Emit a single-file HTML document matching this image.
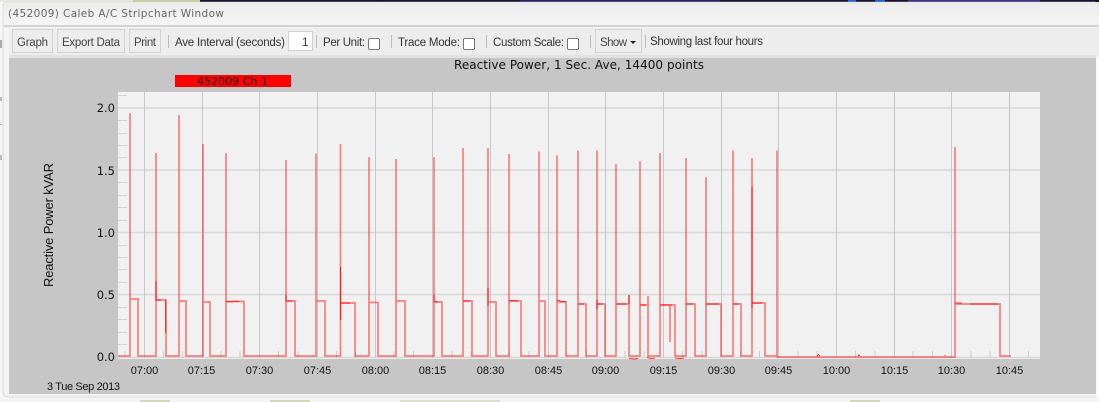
<!DOCTYPE html>
<html>
<head>
<meta charset="utf-8">
<style>
html,body{margin:0;padding:0;background:#fff;width:1099px;height:402px;overflow:hidden}
svg{display:block;filter:blur(0.35px)}
.t{font-family:"Liberation Sans",sans-serif;font-size:11.5px;fill:#444}
.d{font-family:"DejaVu Sans",sans-serif;fill:#111}
.x{font-family:"Liberation Sans",sans-serif;font-size:11px;text-anchor:middle}
.y{font-size:11.5px;text-anchor:end}
</style>
</head>
<body>
<svg width="1099" height="402" viewBox="0 0 1099 402" xmlns="http://www.w3.org/2000/svg">
<defs>
<linearGradient id="tb" x1="0" y1="0" x2="0" y2="1"><stop offset="0" stop-color="#ececec"/><stop offset="1" stop-color="#f6f6f6"/></linearGradient>
</defs>
<rect width="1099" height="402" fill="#f7f7f5"/>
<!-- desktop strip behind window -->
<rect x="0" y="0" width="133" height="2" fill="#e8e8e0"/>
<rect x="133" y="0" width="67" height="2" fill="#c8d0a0"/>
<rect x="200" y="0" width="899" height="2" fill="#15122a"/>
<rect x="520" y="0" width="200" height="2" fill="#2a2266"/>
<rect x="908" y="0" width="132" height="2" fill="#40308a"/>
<rect x="848" y="0" width="8" height="2" fill="#2060e0"/>
<rect x="875" y="0" width="10" height="2" fill="#2060e0"/>
<rect x="0" y="397" width="1099" height="5" fill="#f4f4f2"/>
<rect x="140" y="400" width="30" height="2" fill="#d6d6bc"/>
<rect x="270" y="400" width="40" height="2" fill="#d6d6bc"/>
<rect x="400" y="400" width="100" height="2" fill="#dedecc"/>
<rect x="850" y="400" width="30" height="2" fill="#d6d6bc"/>
<rect x="0" y="124" width="2" height="1" fill="#aaa"/>
<rect x="0" y="155" width="2" height="5" fill="#bbb"/>
<rect x="0" y="97" width="2" height="4" fill="#bbb"/>
<rect x="0" y="40" width="2" height="8" fill="#aaa"/>
<!-- window -->
<rect x="3" y="2" width="1096" height="395" rx="4" fill="#f4f4f4" stroke="#c8c8c8" stroke-width="0.6"/>
<rect x="4" y="3" width="1095" height="22" rx="3" fill="url(#tb)"/>
<rect x="4" y="25" width="1095" height="2" fill="#d2d2d2"/>
<text x="8" y="17" class="d" style="font-size:10.5px;fill:#666" textLength="216" lengthAdjust="spacing">(452009) Caleb A/C Stripchart Window</text>
<!-- toolbar -->
<rect x="9" y="28" width="1090" height="27" fill="#ededed"/>
<rect x="9" y="55" width="1087" height="3" fill="#e2e2e2"/>
<g fill="#ededed" stroke="#d2d2d2">
<rect x="12.500" y="29.500" width="40" height="23"/>
<rect x="57.500" y="29.500" width="67" height="23"/>
<rect x="129.500" y="29.500" width="31" height="23"/>
<rect x="595.500" y="29.500" width="46" height="23"/>
</g>
<rect x="288.500" y="31.500" width="24" height="19" fill="#fff" stroke="#d0d0d0"/>
<g stroke="#bdbdb0" stroke-width="1">
<path d="M168.500 35V48M316.500 35V48M391.500 35V48M486.500 35V48M590.500 35V48M645.500 35V48"/>
</g>
<g fill="#fff" stroke="#555" stroke-width="0.8">
<rect x="368.500" y="38.500" width="11" height="11" rx="1.500"/>
<rect x="463.500" y="38.500" width="11" height="11" rx="1.500"/>
<rect x="567.500" y="38.500" width="11" height="11" rx="1.500"/>
</g>
<text class="t" x="17" y="46" textLength="31">Graph</text>
<text class="t" x="62" y="46" textLength="58">Export Data</text>
<text class="t" x="134" y="46" textLength="22">Print</text>
<text class="t" x="175" y="46" textLength="110" style="fill:#333">Ave Interval (seconds)</text>
<text class="t" x="302" y="46" style="fill:#333">1</text>
<text class="t" x="323" y="46" textLength="42" style="fill:#333">Per Unit:</text>
<text class="t" x="398" y="46" textLength="62" style="fill:#333">Trace Mode:</text>
<text class="t" x="493" y="46" textLength="71" style="fill:#333">Custom Scale:</text>
<text class="t" x="600" y="46" textLength="27">Show</text>
<path d="M630 41H636L633 44Z" fill="#222"/>
<text class="t" x="650" y="45" textLength="113" style="fill:#333">Showing last four hours</text>
<!-- chart panel -->
<rect x="9" y="58" width="1087" height="336" fill="#c6c6c6"/>
<rect x="118" y="92" width="922" height="267" fill="#f1f1f1"/>
<text class="d" x="454" y="69" style="font-size:12px" textLength="250">Reactive Power, 1 Sec. Ave, 14400 points</text>
<rect x="175" y="75" width="116" height="12" fill="#ff0000"/>
<text class="d" x="197" y="85" style="font-size:11px" textLength="71">452009 Ch 1</text>
<!-- horizontal grid -->
<g stroke="#d8d8d8" stroke-width="1.6" fill="none">
<path d="M118 108H1040M118 170H1040M118 232.500H1040M118 294.500H1040M118 357.500H1040"/>
</g>
<!-- y minor ticks -->
<g stroke="#d4d4d4" stroke-width="1" fill="none">
<path d="M118 95.500h9M118 120.500h9M118 133.500h9M118 145.500h9M118 157.500h9M118 182.500h9M118 195.500h9M118 207.500h9M118 220.500h9M118 245.500h9M118 257.500h9M118 269.500h9M118 282.500h9M118 307.500h9M118 319.500h9M118 332.500h9M118 344.500h9"/>
</g>
<!-- vertical grid -->
<g stroke="#c8c8c8" stroke-width="1" fill="none">
<path d="M144.500 92V358M202.500 92V358M259.500 92V358M317.500 92V358M375.500 92V358M432.500 92V358M490.500 92V358M548.500 92V358M605.500 92V358M663.500 92V358M721.500 92V358M778.500 92V358M836.500 92V358M894.500 92V358M951.500 92V358M1009.500 92V358"/>
</g>
<!-- x minor ticks -->
<g stroke="#cccccc" stroke-width="1" fill="none">
<path d="M125 351V358M163.500 351V358M182.500 351V358M221 351V358M240 351V358M278.500 351V358M298 351V358M336.500 351V358M355.500 351V358M394 351V358M413.500 351V358M452 351V358M471 351V358M509.500 351V358M529 351V358M567 351V358M586.500 351V358M625 351V358M644 351V358M682.500 351V358M702 351V358M740.500 351V358M759.500 351V358M798 351V358M817 351V358M855.500 351V358M875 351V358M913 351V358M932.500 351V358M971 351V358M990 351V358M1028.500 351V358"/>
</g>
<!-- trace -->
<path fill="none" stroke="#ff0000" stroke-opacity="0.48" stroke-width="1.7" d="M118 356H130V113V299H138V356H156V153V300H166V356H179V115V301H186V356H203V144V302H210V356H226V153V301.500H244V356H286V160V301H295V356H316V153.500V301H325V356H340.500V144V303H355V356H369V157V302.500H378V356H396V159V301H405V356H434V157V302H442V356H463V148V301H472V356H488V148V302H496V356H509V154V301H521V356H539V151.500V301H545V356H557V155.500V302H566V356H578V150.500V304H586V356H597V150.500V304H605V356H616V164V304H629V295V356H640V161V305H648V296V356H660V153V305H670V342V305H675V356H686V158V304H695V356H706V177V304H721V356H733V150.500V304H741V356H752V158V303H765V356H777V150.500V357H955V147V304H1000V356H1011"/>
<!-- denser parts of the trace -->
<path fill="none" stroke="#ff0000" stroke-width="0.8" d="M156 281V300H161M165.700 300V333M226 301.500l5 .5 4-1 4 .5M286 295V301H292M340.500 267V320M341 303H350M434 295V301.500l4 .5M463 301H470M488 288V306M509 301l5-.5 4 .5M557 300l5 1.500H566M578 304H584M597 300V309M597 304H603M616 304H627M629 295V304M640 305H646M660 305H672M686 304H693M706 304H719M733 304H739M752 187V308M752 303H762M955 303H962M970 304H998M629 358.500l5 .5 4-.500M647 357.500l4 1 4-.500M675 358l5 .5 4-.500M817 356l1.500-1.500 1.500 1.500M858 356l1-1 1 1M945 356v-1"/>
<!-- y labels -->
<g class="d">
<text class="y" x="115" y="112">2.0</text>
<text class="y" x="115" y="175">1.5</text>
<text class="y" x="115" y="237">1.0</text>
<text class="y" x="115" y="299">0.5</text>
<text class="y" x="115" y="361">0.0</text>
</g>
<text transform="translate(53,287) rotate(-90)" style="font-family:'Liberation Sans',sans-serif;font-size:13px;fill:#111" textLength="124">Reactive Power kVAR</text>
<!-- x labels -->
<g class="d">
<text class="x" x="144.500" y="374">07:00</text>
<text class="x" x="201.500" y="374">07:15</text>
<text class="x" x="259.500" y="374">07:30</text>
<text class="x" x="317.500" y="374">07:45</text>
<text class="x" x="375.500" y="374">08:00</text>
<text class="x" x="432.500" y="374">08:15</text>
<text class="x" x="490.500" y="374">08:30</text>
<text class="x" x="548.500" y="374">08:45</text>
<text class="x" x="605.500" y="374">09:00</text>
<text class="x" x="663.500" y="374">09:15</text>
<text class="x" x="721.500" y="374">09:30</text>
<text class="x" x="778.500" y="374">09:45</text>
<text class="x" x="836.500" y="374">10:00</text>
<text class="x" x="894.500" y="374">10:15</text>
<text class="x" x="951.500" y="374">10:30</text>
<text class="x" x="1009.500" y="374">10:45</text>
</g>
<text x="47" y="390" style="font-family:'Liberation Sans',sans-serif;font-size:11px;fill:#111" textLength="73">3 Tue Sep 2013</text>
<rect x="1096" y="58" width="3" height="339" fill="#fbfbfb"/>
</svg>
</body>
</html>
